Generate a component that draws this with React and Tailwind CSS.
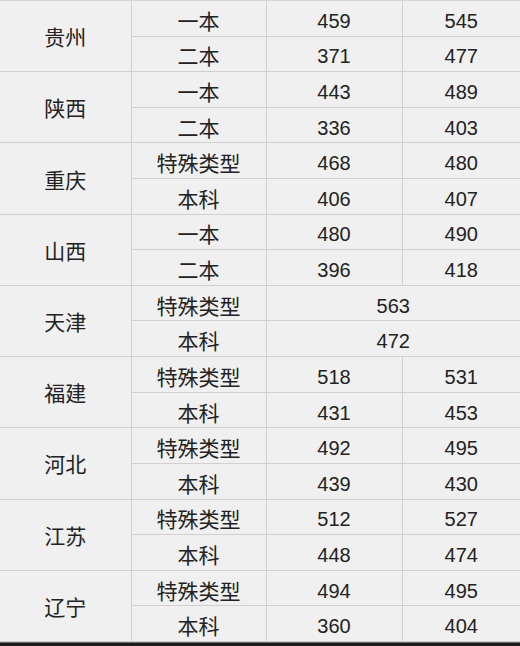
import React from "react";

const data = [
  { name: "贵州", rows: [["一本", "459", "545"], ["二本", "371", "477"]] },
  { name: "陕西", rows: [["一本", "443", "489"], ["二本", "336", "403"]] },
  { name: "重庆", rows: [["特殊类型", "468", "480"], ["本科", "406", "407"]] },
  { name: "山西", rows: [["一本", "480", "490"], ["二本", "396", "418"]] },
  { name: "天津", rows: [["特殊类型", "563"], ["本科", "472"]] },
  { name: "福建", rows: [["特殊类型", "518", "531"], ["本科", "431", "453"]] },
  { name: "河北", rows: [["特殊类型", "492", "495"], ["本科", "439", "430"]] },
  { name: "江苏", rows: [["特殊类型", "512", "527"], ["本科", "448", "474"]] },
  { name: "辽宁", rows: [["特殊类型", "494", "495"], ["本科", "360", "404"]] },
];

function Row({ cells, last }) {
  return (
    <div className={"flex flex-1 basis-0 min-h-0 " + (last ? "" : "border-b-[1.5px] border-[#d0d0d0]")}>
      <div className="w-[135px] flex items-center justify-center pt-[6px] border-r-[1.5px] border-[#d0d0d0] text-[21px]">
        {cells[0]}
      </div>
      {cells.length === 2 ? (
        <div className="flex-1 flex items-center justify-center pt-[5px] text-[20px]">{cells[1]}</div>
      ) : (
        <>
          <div className="w-[136px] flex items-center justify-center pt-[5px] border-r-[1.5px] border-[#d0d0d0] text-[20px]">
            {cells[1]}
          </div>
          <div className="flex-1 flex items-center justify-center pt-[5px] text-[20px]">{cells[2]}</div>
        </>
      )}
    </div>
  );
}

export default function App() {
  return (
    <div
      className="w-[520px] h-[646px] bg-[#f0f0f0] text-[#222222] leading-none flex flex-col overflow-hidden"
      style={{ fontFamily: '"Liberation Sans", "Noto Sans CJK SC", sans-serif' }}
    >
      <div className="h-px bg-[#d6d6d6]" />
      {data.map((g) => (
        <div key={g.name} className="flex flex-1 basis-0 min-h-0 border-b-[1.5px] border-[#d0d0d0]">
          <div className="w-[131.5px] flex items-center justify-center pt-[3px] border-r-[1.5px] border-[#d0d0d0] text-[21px]">
            {g.name}
          </div>
          <div className="flex-1 flex flex-col">
            {g.rows.map((r, i) => (
              <Row key={i} cells={r} last={i === g.rows.length - 1} />
            ))}
          </div>
        </div>
      ))}
      <div className="h-[4px] bg-[#1c1c1c] border-t border-[#6a6a6a]" />
    </div>
  );
}
